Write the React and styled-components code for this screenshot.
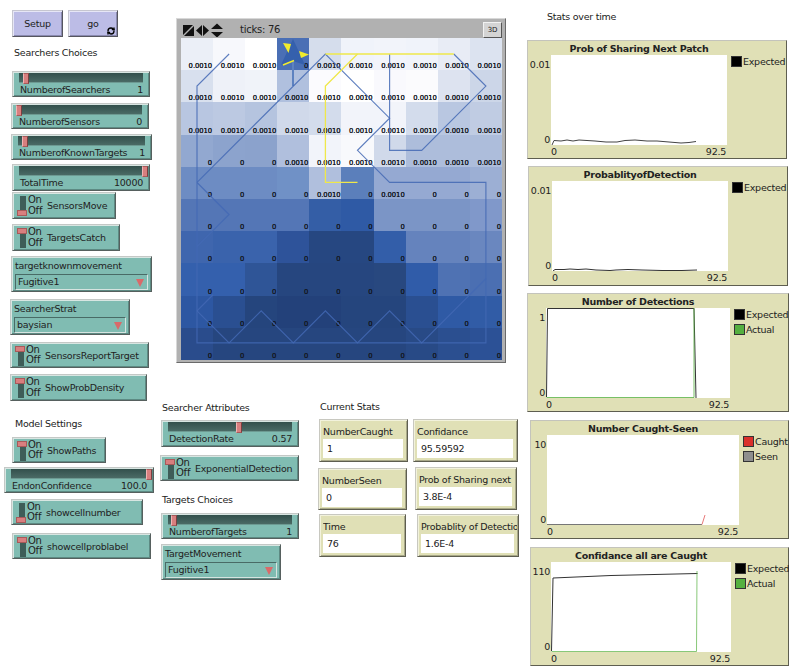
import React from "react";
import styled, { createGlobalStyle } from "styled-components";
import { RefreshCw } from "lucide-react";

const GlobalStyle = createGlobalStyle`
  html, body {
    margin: 0;
    padding: 0;
    background: #fff;
    overflow: hidden;
  }
  * {
    box-sizing: border-box;
  }
`;

const Page = styled.div`
  display: flex;
  width: 789px;
  height: 666px;
  overflow: hidden;
  background: #fff;
  color: #222;
  font-family: "DejaVu Sans", sans-serif;
  font-size: 9.5px;
  letter-spacing: -0.25px;
`;

const Column = styled.div`
  display: flex;
  flex-direction: column;
  align-items: flex-start;
  flex: none;
  width: ${(p) => p.$w}px;
  padding-top: ${(p) => p.$top || 0}px;
`;

const Heading = styled.div`
  height: 12px;
  line-height: 12px;
  margin: ${(p) => p.$mt || 0}px 0 0 ${(p) => p.$ml || 0}px;
  white-space: nowrap;
`;

/* shared bevel of every NetLogo widget */
const Widget = styled.div`
  flex: none;
  position: relative;
  width: ${(p) => p.$w}px;
  height: ${(p) => p.$h || 26}px;
  margin: ${(p) => p.$mt || 0}px 0 0 ${(p) => p.$ml || 0}px;
  background: #80bcb2;
  border: 1px solid;
  border-color: #c4c8c6 #56605e #56605e #c4c8c6;
  box-shadow: inset 1px 1px 0 #d8e6e2, inset -1px -1px 0 #5d8a83;
`;

const ButtonRow = styled.div`
  display: flex;
  gap: 5px;
  margin: 10px 0 0 12px;
`;

const PushButton = styled.div`
  position: relative;
  width: ${(p) => p.$w}px;
  height: 27px;
  display: flex;
  align-items: center;
  justify-content: center;
  background: #bcbce6;
  border: 1px solid;
  border-color: #c6c6d0 #56565f #56565f #c6c6d0;
  box-shadow: inset 1px 1px 0 #e6e6f6, inset -1px -1px 0 #8a8ab0;
`;

const Forever = styled.span`
  position: absolute;
  right: 2px;
  bottom: 1px;
  display: flex;
  color: #000;
`;

const SliderBody = styled(Widget)`
  padding: 1px 6px 0 6px;
`;

const Track = styled.div`
  position: relative;
  height: 10px;
  background: linear-gradient(#33504c, #4a6a65);
  border-bottom: 1px solid #6d9a92;
`;

const Thumb = styled.div`
  position: absolute;
  top: 0;
  left: ${(p) => p.$at}px;
  width: 6px;
  height: 11px;
  background: #d87f7f;
  border: 1px solid #a85a5a;
  border-right-color: #7a4040;
  border-left-color: #efb5b5;
`;

const SliderText = styled.div`
  display: flex;
  justify-content: space-between;
  margin-top: 1px;
  padding-left: 1px;
  line-height: 11px;
  white-space: nowrap;
`;

const SwitchBody = styled(Widget)`
  display: flex;
  align-items: center;
  padding-left: 4px;
`;

const SwitchTrack = styled.div`
  position: relative;
  flex: none;
  width: 10px;
  height: 20px;
  margin-top: 1px;
`;

const SwitchSlot = styled.div`
  position: absolute;
  top: 0;
  bottom: 0;
  left: 3px;
  width: 6px;
  background: #3e5d58;
`;

const SwitchKnob = styled.div`
  position: absolute;
  left: 0;
  top: ${(p) => (p.$on ? 0 : 14)}px;
  width: 10px;
  height: 6px;
  background: #d87f7f;
  border: 1px solid #a85a5a;
`;

const SwitchStates = styled.div`
  width: 19px;
  margin-left: 1px;
  line-height: 10.5px;
  font-size: 10px;
`;

const SwitchName = styled.div`
  white-space: nowrap;
`;

const ChooserBody = styled(Widget)`
  height: 36px;
  padding: 3px 3px 0 3px;
`;

const ChooserLabel = styled.div`
  line-height: 12px;
  white-space: nowrap;
`;

const ChooserBox = styled.div`
  position: relative;
  height: 16px;
  margin-top: 2px;
  padding-left: 2px;
  line-height: 14px;
  border: 1px solid;
  border-color: #496b66 #d6e4e0 #d6e4e0 #496b66;
`;

const ChooserArrow = styled.div`
  position: absolute;
  right: 3px;
  top: 4px;
  width: 0;
  height: 0;
  border-left: 4px solid transparent;
  border-right: 4px solid transparent;
  border-top: 8px solid #d96a6a;
`;

const WorldFrame = styled.div`
  width: 330px;
  height: 345px;
  margin: 18px 0 0 16px;
  padding: 2px 3px 3px 4px;
  background: #b1b1b1;
  border: 1px solid;
  border-color: #d8d8d8 #6a6a6a #6a6a6a #d8d8d8;
`;

const WorldBar = styled.div`
  display: flex;
  align-items: center;
  height: 17px;
  padding-left: 1px;
`;

const Ticks = styled.div`
  margin-left: 15px;
  font-size: 10px;
`;

const ThreeD = styled.div`
  margin-left: auto;
  width: 19px;
  height: 16px;
  display: flex;
  align-items: center;
  justify-content: center;
  font-size: 7px;
  background: #d4d4d4;
  border: 1px solid;
  border-color: #f2f2f2 #555 #555 #f2f2f2;
`;

const WorldGrid = styled.div`
  position: relative;
  display: grid;
  grid-template-columns: repeat(10, 32.1px);
  grid-template-rows: repeat(10, 32.2px);
  width: 321px;
  height: 322px;
`;

const Patch = styled.div`
  display: flex;
  align-items: flex-end;
  justify-content: flex-end;
  padding-right: 1px;
  font-size: 6.8px;
  letter-spacing: -0.05px;
  line-height: 8px;
  color: #141820;
  text-shadow: 0 0 0.2px #141820;
`;

const Trails = styled.svg`
  position: absolute;
  left: 0;
  top: 0;
`;

const BelowWorld = styled.div`
  display: flex;
  margin-top: 38px;
`;

const MonitorRow = styled.div`
  display: flex;
  align-items: flex-start;
  margin-top: ${(p) => p.$mt}px;
`;

const Monitor = styled.div`
  flex: none;
  width: ${(p) => p.$w}px;
  height: ${(p) => p.$h || 43}px;
  margin: ${(p) => p.$mt || 0}px 0 0 ${(p) => p.$ml || 0}px;
  padding: 6px 1px 0 3px;
  overflow: hidden;
  background: #e0e0b6;
  border: 1px solid;
  border-color: #c8c8c0 #5e5e50 #5e5e50 #c8c8c0;
  box-shadow: inset 1px 1px 0 #f2f2dc, inset -1px -1px 0 #a8a888;
`;

const MonitorLabel = styled.div`
  line-height: 12px;
  white-space: nowrap;
  overflow: hidden;
`;

const MonitorValue = styled.div`
  height: 19px;
  margin: 1px 3px 0 0;
  padding-left: 4px;
  line-height: 19px;
  background: #fff;
`;

const PlotBody = styled.div`
  flex: none;
  display: grid;
  grid-template-columns: ${(p) => p.$axis}px ${(p) => p.$plot}px 1fr;
  grid-template-rows: 14px 90px 1fr;
  width: ${(p) => p.$w || 260}px;
  height: ${(p) => p.$h || 119}px;
  margin: ${(p) => p.$mt || 0}px 0 0 ${(p) => p.$ml || 0}px;
  background: #e0e0b6;
  border: 1px solid;
  border-color: #c4c4bc #5e5e50 #5e5e50 #c4c4bc;
`;

const PlotTitle = styled.div`
  grid-column: 2;
  display: flex;
  justify-content: center;
  align-items: center;
  font-weight: bold;
  white-space: nowrap;
`;

const YAxis = styled.div`
  grid-column: 1;
  grid-row: 2;
  display: flex;
  flex-direction: column;
  justify-content: space-between;
  align-items: flex-end;
  margin-bottom: -1px;
  padding: 4px 1px 0 0;
  line-height: 12px;
`;

const PlotArea = styled.svg`
  grid-column: 2;
  grid-row: 2;
  display: block;
  background: #fff;
`;

const XAxis = styled.div`
  grid-column: 2;
  grid-row: 3;
  display: flex;
  justify-content: space-between;
  padding-right: 1px;
  line-height: 13px;
`;

const Legend = styled.div`
  grid-column: 3;
  grid-row: 2;
  display: flex;
  flex-direction: column;
  gap: 4px;
  padding: 1px 0 0 4px;
`;

const LegendItem = styled.div`
  display: flex;
  align-items: center;
  gap: 1px;
  height: 11px;
  line-height: 13px;
  white-space: nowrap;
`;

const Swatch = styled.span`
  width: 11px;
  height: 11px;
  background: ${(p) => p.$color};
  border: 1px solid #333;
`;

const SHADES = [
  ["#ebeff7", "#f7f8fc", "#ffffff", "#4a6fb5", "#d5ddec", "#f0f3fa", "#f2f4fa", "#f0f3fa", "#e8ecf5", "#dce3f0"],
  ["#d8e0ee", "#eef1f8", "#f0f3f9", "#b0c0de", "#fbfbfe", "#ffffff", "#f9f9fd", "#fbfbfd", "#dde3f0", "#ccd6e8"],
  ["#b8c6e1", "#bcc9e2", "#b5c4df", "#d0d9ea", "#d3dcec", "#f2f4fa", "#f2f4fa", "#d3dcec", "#b9c7e1", "#c0cce3"],
  ["#92a8d0", "#8ca3cd", "#8ba2cc", "#b0bfdd", "#f2f4fa", "#f8f9fc", "#d0d9ea", "#adbddb", "#adbddb", "#adbddb"],
  ["#6d8cc3", "#6d8cc3", "#6d8cc3", "#7091c6", "#b0bfdd", "#5b7fbb", "#95a9d2", "#95a9d2", "#95a9d2", "#9cafd4"],
  ["#5476b6", "#5476b6", "#5476b6", "#5476b6", "#345ea6", "#2f5aa5", "#7b95c6", "#7b95c6", "#7b95c6", "#8098ca"],
  ["#3f66ae", "#3a63ac", "#3a63ac", "#2e539a", "#264781", "#264781", "#335ea9", "#6583bd", "#6583bd", "#6a87bf"],
  ["#3460ad", "#3460ad", "#2f5597", "#26467f", "#26467f", "#26467f", "#28487f", "#305ca9", "#4f72b3", "#4b6fb2"],
  ["#2d57a2", "#2a4f91", "#25457d", "#23417a", "#23417a", "#25457d", "#25457d", "#2a4f91", "#2f5aa5", "#315ca6"],
  ["#2a4c8c", "#26467f", "#26467f", "#26467f", "#26467f", "#26467f", "#26467f", "#284a86", "#2b4f90", "#2c5196"],
];

// 1 marks a patch labelled 0.0010, everything else reads 0
const LABELS = [
  [1, 1, 1, 0, 1, 1, 1, 1, 1, 1],
  [1, 1, 1, 1, 1, 1, 1, 1, 1, 1],
  [1, 1, 1, 1, 1, 1, 1, 1, 1, 1],
  [0, 0, 0, 1, 1, 1, 1, 1, 1, 1],
  [0, 0, 0, 0, 1, 0, 1, 0, 0, 0],
  [0, 0, 0, 0, 0, 0, 0, 0, 0, 0],
  [0, 0, 0, 0, 0, 0, 0, 0, 0, 0],
  [0, 0, 0, 0, 0, 0, 0, 0, 0, 0],
  [0, 0, 0, 0, 0, 0, 0, 0, 0, 0],
  [0, 0, 0, 0, 0, 0, 0, 0, 0, 0],
];

// patch centres, in col,row
const at = (pts) => pts.map(([c, r]) => `${16 + c * 32.1},${16 + r * 32.1}`).join(" ");

const BLUE_TRAILS = [
  [[1, 0], [0, 1], [0, 9], [9, 9], [9, 4], [6, 4], [5, 3], [6, 2], [4, 0], [0, 4], [1, 5], [0, 6]],
  [[6, 0], [6, 3], [7, 3], [9, 1], [8, 0]],
  [[0, 8], [1, 9], [2, 8], [3, 9], [4, 8], [5, 9], [6, 8], [7, 9], [9, 7]],
  [[0, 8], [0.5, 7.5]],
];

const YELLOW_TRAILS = [
  [[4, 0], [8, 0]],
  [[5, 0], [4, 1], [4, 4], [5, 4]],
];

const World = () => (
  <WorldFrame>
    <WorldBar>
      <svg width="43" height="14" viewBox="0 0 43 14">
        <path d="M1 2h10L1 12z" fill="#111" />
        <path d="M12 3v10H2z" fill="#111" />
        <path d="M14 7.5 20 2v11zM21 2l6 5.5L21 13z" fill="#111" />
        <path d="M29 6l6-5.5L41 6zM29 9h12l-6 5.5z" fill="#111" />
      </svg>
      <Ticks>ticks: 76</Ticks>
      <ThreeD>3D</ThreeD>
    </WorldBar>
    <WorldGrid>
      {SHADES.map((row, r) =>
        row.map((shade, c) => (
          <Patch key={`${r}-${c}`} style={{ background: shade }}>
            {LABELS[r][c] ? "0.0010" : "0"}
          </Patch>
        ))
      )}
      <Trails width="321" height="322" viewBox="0 0 321 322" fill="none">
        <path d="M112 16v32" stroke="#5d82c0" strokeWidth="2" />
        {BLUE_TRAILS.map((pts, i) => (
          <polyline key={i} points={at(pts)} stroke="#4369b4" strokeOpacity="0.85" strokeWidth="1.15" />
        ))}
        {YELLOW_TRAILS.map((pts, i) => (
          <polyline key={i} points={at(pts)} stroke="#efe84a" strokeWidth="1.3" />
        ))}
        <path d="M112 1 100 27l12-4 12 4z" fill="#3560ad" />
        <path d="M102 5l8 1-2.5 9z" fill="#f2ec2c" />
        <path d="M118 13l10 3.5-8 3.5z" fill="#f2ec2c" />
        <path d="M102 27l11-4.5" stroke="#f2ec2c" strokeWidth="1.5" />
      </Trails>
    </WorldGrid>
  </WorldFrame>
);

const Slider = ({ label, value, at: thumbAt, ...box }) => (
  <SliderBody {...box}>
    <Track>
      <Thumb $at={thumbAt} />
    </Track>
    <SliderText>
      <span>{label}</span>
      <span>{value}</span>
    </SliderText>
  </SliderBody>
);

const Switch = ({ label, on, ...box }) => (
  <SwitchBody {...box}>
    <SwitchTrack>
      <SwitchSlot />
      <SwitchKnob $on={on} />
    </SwitchTrack>
    <SwitchStates>
      On
      <br />
      Off
    </SwitchStates>
    <SwitchName>{label}</SwitchName>
  </SwitchBody>
);

const Chooser = ({ label, value, ...box }) => (
  <ChooserBody {...box} $h={36}>
    <ChooserLabel>{label}</ChooserLabel>
    <ChooserBox>
      {value}
      <ChooserArrow />
    </ChooserBox>
  </ChooserBody>
);

const Stat = ({ label, value, ...box }) => (
  <Monitor {...box}>
    <MonitorLabel>{label}</MonitorLabel>
    <MonitorValue>{value}</MonitorValue>
  </Monitor>
);

const Plot = ({ title, top, legend, axis, plot, children, ...box }) => (
  <PlotBody $axis={axis} $plot={plot} {...box}>
    <PlotTitle>{title}</PlotTitle>
    <YAxis>
      <span>{top}</span>
      <span>0</span>
    </YAxis>
    <PlotArea width={plot} height="90" viewBox={`0 0 ${plot} 90`} fill="none">
      {children}
    </PlotArea>
    <XAxis>
      <span>0</span>
      <span>92.5</span>
    </XAxis>
    <Legend>
      {legend.map(([name, color]) => (
        <LegendItem key={name}>
          <Swatch $color={color} />
          {name}
        </LegendItem>
      ))}
    </Legend>
  </PlotBody>
);

const BLACK = "#000";
const GREEN = "#55b040";

export default function App() {
  return (
    <Page>
      <GlobalStyle />
      <Column $w={160}>
        <ButtonRow>
          <PushButton $w={51}>Setup</PushButton>
          <PushButton $w={50}>
            go
            <Forever>
              <RefreshCw size={8} strokeWidth={4} />
            </Forever>
          </PushButton>
        </ButtonRow>
        <Heading $mt={10} $ml={14}>Searchers Choices</Heading>
        <Slider $mt={12} $ml={12} $w={138} label="NumberofSearchers" value="1" at={4} />
        <Slider $mt={6} $ml={11} $w={138} label="NumberofSensors" value="0" at={-2} />
        <Slider $mt={5} $ml={11} $w={141} label="NumberofKnownTargets" value="1" at={4} />
        <Slider $mt={4} $ml={12} $w={138} $h={27} label="TotalTime" value="10000" at={123} />
        <Switch $mt={1} $ml={12} $w={104} $h={27} label="SensorsMove" />
        <Switch $mt={5} $ml={12} $w={108} $h={27} label="TargetsCatch" on />
        <Chooser $mt={5} $ml={11} $w={141} label="targetknownmovement" value="Fugitive1" />
        <Chooser $mt={7} $ml={10} $w={120} label="SearcherStrat" value="baysian" />
        <Switch $mt={7} $ml={10} $w={139} label="SensorsReportTarget" on />
        <Switch $mt={6} $ml={10} $w={137} $h={27} label="ShowProbDensity" on />
        <Heading $mt={17} $ml={15}>Model Settings</Heading>
        <Switch $mt={7} $ml={12} $w={94} label="ShowPaths" on />
        <Slider $mt={4} $ml={4} $w={150} label="EndonConfidence" value="100.0" at={135} />
        <Switch $mt={6} $ml={11} $w={132} label="showcellnumber" />
        <Switch $mt={8} $ml={12} $w={139} label="showcellproblabel" on />
      </Column>

      <Column $w={366}>
        <World />
        <BelowWorld>
          <Column $w={158} $top={1}>
            <Heading $ml={2}>Searcher Attributes</Heading>
            <Slider $mt={6} $ml={1} $w={138} $h={27} label="DetectionRate" value="0.57" at={68} />
            <Switch $mt={8} $w={139} label="ExponentialDetection" on />
            <Heading $mt={13} $ml={2}>Targets Choices</Heading>
            <Slider $mt={7} $ml={1} $w={138} label="NumberofTargets" value="1" at={3} />
            <Chooser $mt={5} $ml={1} $w={120} label="TargetMovement" value="Fugitive1" />
          </Column>
          <Column $w={208}>
            <Heading $ml={2}>Current Stats</Heading>
            <MonitorRow $mt={6}>
              <Stat $ml={1} $w={89} label="NumberCaught" value="1" />
              <Stat $ml={5} $w={105} label="Confidance" value="95.59592" />
            </MonitorRow>
            <MonitorRow $mt={5}>
              <Stat $mt={1} $w={89} $h={42} label="NumberSeen" value="0" />
              <Stat $ml={8} $w={102} label="Prob of Sharing next" value="3.8E-4" />
            </MonitorRow>
            <MonitorRow $mt={4}>
              <Stat $ml={1} $w={87} label="Time" value="76" />
              <Stat $ml={11} $w={102} label="Probablity of Detection" value="1.6E-4" />
            </MonitorRow>
          </Column>
        </BelowWorld>
      </Column>

      <Column $w={263}>
        <Heading $mt={11} $ml={21}>Stats over time</Heading>
        <Plot $mt={17} $ml={1} axis={23} plot={176} title="Prob of Sharing Next Patch" top="0.01" legend={[["Expected", BLACK]]}>
          <polyline
            points="1,90 3,85.5 10,86 16,85 22,86 28,85 36,85.5 44,86 55,87 66,87 74,85.5 84,85 96,86 106,86 118,87 130,88 138,87.5 145,86.5"
            stroke="#444"
          />
        </Plot>
        <Plot $mt={7} $ml={2} $h={120} axis={23} plot={176} title="ProbablityofDetection" top="0.01" legend={[["Expected", BLACK]]}>
          <polyline
            points="1,90 3,88.5 12,88.5 18,88 26,88.5 34,88 44,89 58,89.5 64,89 76,88.5 90,89 110,89.5 130,89.5 145,89"
            stroke="#333"
          />
        </Plot>
        <Plot $mt={7} $ml={1} $w={262} axis={18} plot={184} title="Number of Detections" top="1" legend={[["Expected", BLACK], ["Actual", GREEN]]}>
          <polyline points="0.5,89 1.5,0.5 148,0.5 150,90" stroke="#333" />
          <polyline points="0.5,89.5 148,89.5 148,0" stroke={GREEN} strokeOpacity="0.8" />
        </Plot>
        <Plot $mt={8} $ml={4} $w={259} axis={16} plot={192} title="Number Caught-Seen" top="10" legend={[["Caught", "#d9302c"], ["Seen", "#8e8e8e"]]}>
          <path d="M0 89.5h155" stroke="#777" />
          <path d="M155 89.5l3-9.5" stroke="#e87878" />
        </Plot>
        <Plot $mt={8} $ml={4} $w={259} axis={20} plot={180} title="Confidance all are Caught" top="110" legend={[["Expected", BLACK], ["Actual", GREEN]]}>
          <polyline points="0.5,89 2,16 60,13.5 146.5,11.5" stroke="#333" />
          <polyline points="0.5,89.5 145.5,89.5 146,9" stroke={GREEN} strokeOpacity="0.7" />
        </Plot>
      </Column>
    </Page>
  );
}
